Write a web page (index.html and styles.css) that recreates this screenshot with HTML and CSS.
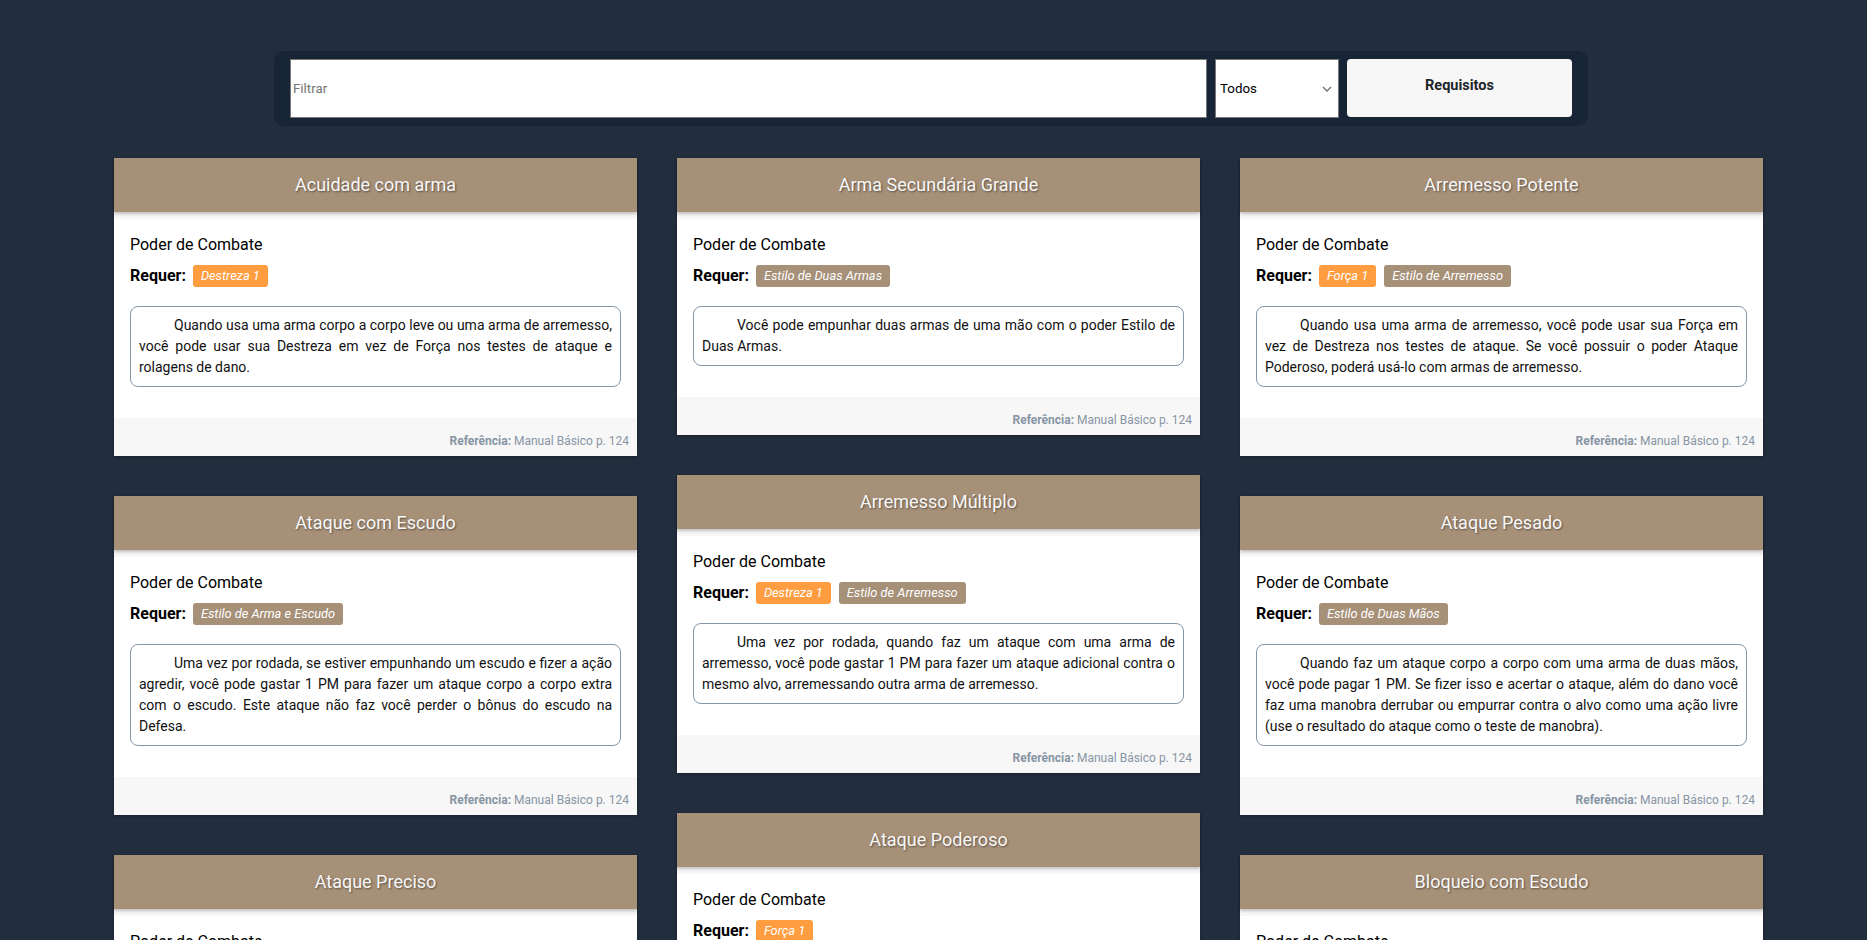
FILE: index.html
```html
<!DOCTYPE html>
<html lang="pt-BR">
<head>
<meta charset="utf-8">
<title>Poderes de Combate</title>
<link rel="stylesheet" href="styles.css">
</head>
<body>
<div class="filters">
  <input class="filter-input" type="text" placeholder="Filtrar">
  <div class="select-wrap">
    <select class="filter-select">
      <option>Todos</option>
    </select>
    <svg class="chevron" width="10" height="6" viewBox="0 0 10 6" aria-hidden="true"><path d="M1 1 L5 5 L9 1" fill="none" stroke="#6e6e6e" stroke-width="1.3"/></svg>
  </div>
  <button class="filter-btn">Requisitos</button>
</div>

<main class="grid">
  <div class="col">
    <article class="card">
      <header class="card-head">Acuidade com arma</header>
      <div class="card-body">
        <div class="type">Poder de Combate</div>
        <div class="req"><b>Requer:</b><span class="tag tag-attr">Destreza 1</span></div>
        <p class="desc">Quando usa uma arma corpo a corpo leve ou uma arma de arremesso, você pode usar sua Destreza em vez de Força nos testes de ataque e rolagens de dano.</p>
      </div>
      <footer class="card-foot"><b>Referência:</b> Manual Básico p. 124</footer>
    </article>
    <article class="card">
      <header class="card-head">Ataque com Escudo</header>
      <div class="card-body">
        <div class="type">Poder de Combate</div>
        <div class="req"><b>Requer:</b><span class="tag tag-power">Estilo de Arma e Escudo</span></div>
        <p class="desc">Uma vez por rodada, se estiver empunhando um escudo e fizer a ação agredir, você pode gastar 1 PM para fazer um ataque corpo a corpo extra com o escudo. Este ataque não faz você perder o bônus do escudo na Defesa.</p>
      </div>
      <footer class="card-foot"><b>Referência:</b> Manual Básico p. 124</footer>
    </article>
    <article class="card">
      <header class="card-head">Ataque Preciso</header>
      <div class="card-body">
        <div class="type">Poder de Combate</div>
        <div class="req"><b>Requer:</b><span class="tag tag-power">Estilo de Uma Arma</span></div>
        <p class="desc">Se estiver empunhando uma arma corpo a corpo em uma das mãos e nada na outra, você recebe +2 na margem de ameaça e +1 no multiplicador de crítico.</p>
      </div>
      <footer class="card-foot"><b>Referência:</b> Manual Básico p. 124</footer>
    </article>
  </div>

  <div class="col">
    <article class="card">
      <header class="card-head">Arma Secundária Grande</header>
      <div class="card-body">
        <div class="type">Poder de Combate</div>
        <div class="req"><b>Requer:</b><span class="tag tag-power">Estilo de Duas Armas</span></div>
        <p class="desc">Você pode empunhar duas armas de uma mão com o poder Estilo de Duas Armas.</p>
      </div>
      <footer class="card-foot"><b>Referência:</b> Manual Básico p. 124</footer>
    </article>
    <article class="card">
      <header class="card-head">Arremesso Múltiplo</header>
      <div class="card-body">
        <div class="type">Poder de Combate</div>
        <div class="req"><b>Requer:</b><span class="tag tag-attr">Destreza 1</span><span class="tag tag-power">Estilo de Arremesso</span></div>
        <p class="desc">Uma vez por rodada, quando faz um ataque com uma arma de arremesso, você pode gastar 1 PM para fazer um ataque adicional contra o mesmo alvo, arremessando outra arma de arremesso.</p>
      </div>
      <footer class="card-foot"><b>Referência:</b> Manual Básico p. 124</footer>
    </article>
    <article class="card">
      <header class="card-head">Ataque Poderoso</header>
      <div class="card-body">
        <div class="type">Poder de Combate</div>
        <div class="req"><b>Requer:</b><span class="tag tag-attr">Força 1</span></div>
        <p class="desc">Sempre que faz um ataque corpo a corpo, você pode sofrer –2 no teste de ataque para receber +5 na rolagem de dano.</p>
      </div>
      <footer class="card-foot"><b>Referência:</b> Manual Básico p. 124</footer>
    </article>
  </div>

  <div class="col">
    <article class="card">
      <header class="card-head">Arremesso Potente</header>
      <div class="card-body">
        <div class="type">Poder de Combate</div>
        <div class="req"><b>Requer:</b><span class="tag tag-attr">Força 1</span><span class="tag tag-power">Estilo de Arremesso</span></div>
        <p class="desc">Quando usa uma arma de arremesso, você pode usar sua Força em vez de Destreza nos testes de ataque. Se você possuir o poder Ataque Poderoso, poderá usá-lo com armas de arremesso.</p>
      </div>
      <footer class="card-foot"><b>Referência:</b> Manual Básico p. 124</footer>
    </article>
    <article class="card">
      <header class="card-head">Ataque Pesado</header>
      <div class="card-body">
        <div class="type">Poder de Combate</div>
        <div class="req"><b>Requer:</b><span class="tag tag-power">Estilo de Duas Mãos</span></div>
        <p class="desc">Quando faz um ataque corpo a corpo com uma arma de duas mãos, você pode pagar 1 PM. Se fizer isso e acertar o ataque, além do dano você faz uma manobra derrubar ou empurrar contra o alvo como uma ação livre (use o resultado do ataque como o teste de manobra).</p>
      </div>
      <footer class="card-foot"><b>Referência:</b> Manual Básico p. 124</footer>
    </article>
    <article class="card">
      <header class="card-head">Bloqueio com Escudo</header>
      <div class="card-body">
        <div class="type">Poder de Combate</div>
        <div class="req"><b>Requer:</b><span class="tag tag-power">Estilo de Arma e Escudo</span></div>
        <p class="desc">Quando sofre dano, você pode gastar 1 PM para receber redução de dano igual ao bônus na Defesa que seu escudo fornece contra este dano.</p>
      </div>
      <footer class="card-foot"><b>Referência:</b> Manual Básico p. 124</footer>
    </article>
  </div>
</main>
</body>
</html>
```

FILE: styles.css
```css
html, body {
  margin: 0;
  padding: 0;
}

body {
  background: #222e3e;
  font-family: Roboto, "Liberation Sans", Arial, sans-serif;
  color: #000;
  overflow: hidden;
}

.filters {
  display: flex;
  gap: 8px;
  width: 1314px;
  box-sizing: border-box;
  margin: 51px 0 0 274px;
  padding: 8px 16px;
  background: #172536;
  border-radius: 10px;
}

.filter-input {
  flex: 1;
  height: 59px;
  box-sizing: border-box;
  margin: 0;
  padding: 1px 2px;
  border: 1px solid #767676;
  border-radius: 0;
  background: #fff;
  font-family: Roboto, sans-serif;
  font-size: 13.33px;
  color: #000;
}

.filter-input::placeholder {
  color: #757575;
}

.select-wrap {
  position: relative;
  width: 124px;
  height: 59px;
}

.filter-select {
  width: 124px;
  height: 59px;
  box-sizing: border-box;
  margin: 0;
  padding: 0 4px;
  border: 1px solid #767676;
  border-radius: 0;
  background: #fff;
  font-family: Roboto, sans-serif;
  font-size: 13.33px;
  color: #000;
  appearance: none;
  -webkit-appearance: none;
}

.chevron {
  position: absolute;
  right: 7px;
  top: 27px;
  pointer-events: none;
}

.filter-btn {
  width: 225px;
  height: 58px;
  margin: 0;
  padding: 0 0 6px;
  border: none;
  border-radius: 4px;
  background: #f7f7f7;
  font-family: Roboto, sans-serif;
  font-size: 14.5px;
  font-weight: 700;
  color: #212529;
}

.grid {
  display: flex;
  gap: 40px;
  margin: 32px 0 0 114px;
}

.col {
  display: flex;
  flex-direction: column;
  gap: 40px;
  width: 523px;
}

.card {
  background: #fff;
  box-shadow: 0 1px 3px rgba(0, 0, 0, 0.3);
}

.card-head {
  position: relative;
  height: 54px;
  line-height: 54px;
  background: #a69078;
  color: #f8f8f8;
  text-align: center;
  font-size: 18px;
  text-shadow: 1px 1px 2px rgba(0, 0, 0, 0.45);
  box-shadow: 0 2px 3px rgba(0, 0, 0, 0.22);
}

.card-body {
  border-top: 7px solid #f7f7f7;
  padding: 16px 16px 31px;
}

.type {
  font-size: 16px;
  line-height: 20px;
}

.req {
  display: flex;
  align-items: center;
  gap: 8px;
  margin-top: 10px;
  font-size: 16px;
  line-height: 20px;
}

.req b {
  margin-right: -1px;
}

.tag {
  display: inline-block;
  height: 22px;
  line-height: 22px;
  padding: 0 8px;
  border-radius: 3px;
  font-size: 12.8px;
  font-style: italic;
  color: #fff;
}

.tag-attr {
  background: #ff9d40;
}

.tag-power {
  background: #a69078;
}

.desc {
  margin: 19px 0 0;
  padding: 8px;
  border: 1px solid #8496aa;
  border-radius: 8px;
  font-size: 14px;
  line-height: 21px;
  text-align: justify;
  text-indent: 35px;
  color: #111;
}

.card-foot {
  padding: 14px 8px 6px;
  background: #f7f7f7;
  text-align: right;
  font-size: 12px;
  line-height: 18px;
  color: #8795a4;
}
```
